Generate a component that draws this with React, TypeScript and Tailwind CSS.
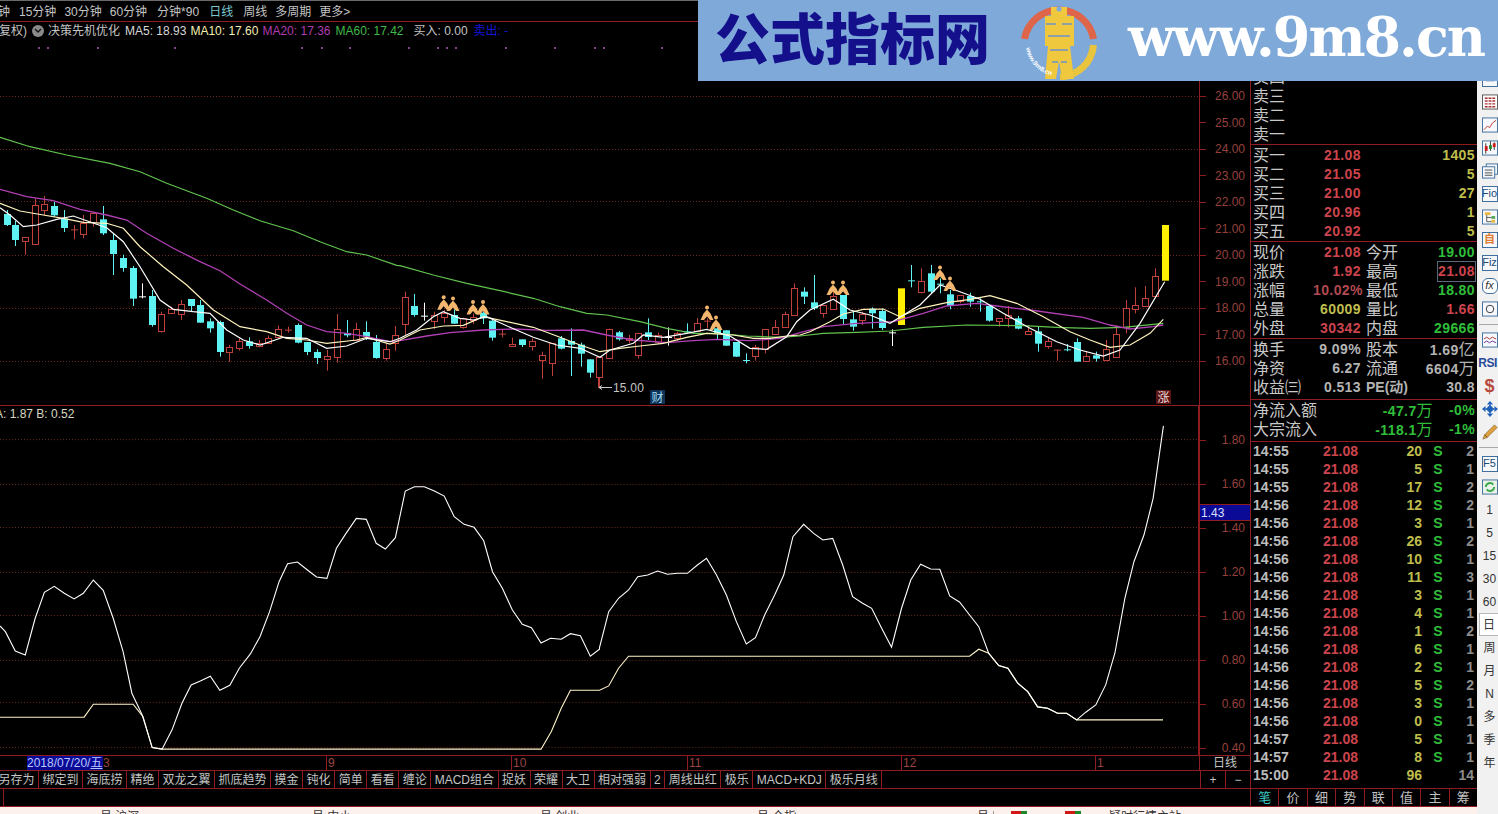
import React from "react";

type P = [number, number];
const z7 = (a: number[][]): P[] => a.map(([x, y]) => [x / 3, 130 + y / 3]);
const z8 = (a: number[][]): P[] => a.map(([x, y]) => [400 + x / 3, 250 + y / 3]);
const z9 = (a: number[][]): P[] => a.map(([x, y]) => [790 + x / 3, 210 + y / 3]);
const pts = (a: P[]) => a.map(([x, y]) => `${x.toFixed(1)},${y.toFixed(1)}`).join(" ");

// kind, x, body top, body bottom, wick top, wick bottom (in zoom coordinates)
type C = [string, number, number, number, number, number];
const c7: C[] = [
  ["c", 20, 252, 285, 240, 288], ["c", 46, 285, 330, 272, 348], ["r", 76, 322, 335, 322, 374], ["r", 106, 225, 342, 205, 342],
  ["r", 133, 222, 240, 198, 256], ["c", 163, 228, 256, 215, 260], ["c", 193, 266, 294, 240, 306], ["x", 221, 298, 300, 285, 328],
  ["r", 250, 278, 312, 255, 325], ["r", 280, 250, 278, 250, 290], ["c", 310, 268, 310, 228, 315], ["c", 340, 330, 372, 310, 435],
  ["c", 368, 384, 414, 374, 425], ["c", 398, 414, 506, 408, 528], ["w", 427, 499, 501, 460, 505], ["c", 457, 498, 585, 480, 590],
  ["r", 484, 553, 603, 545, 608], ["r", 514, 538, 550, 530, 552], ["r", 544, 523, 553, 510, 570], ["c", 574, 507, 528, 507, 545],
  ["c", 601, 525, 578, 510, 578], ["c", 631, 574, 595, 565, 608], ["c", 661, 576, 666, 572, 680], ["r", 688, 651, 667, 645, 695],
  ["r", 718, 634, 654, 625, 662], ["c", 748, 634, 648, 622, 656], ["r", 778, 640, 650, 630, 652], ["r", 805, 625, 640, 616, 640],
  ["r", 835, 596, 620, 587, 626], ["x", 865, 599, 601, 590, 608], ["c", 895, 585, 638, 580, 640], ["c", 922, 636, 666, 636, 675],
  ["c", 952, 666, 684, 658, 702], ["r", 982, 677, 686, 660, 722], ["r", 1012, 596, 680, 552, 698], ["c", 1040, 609, 616, 570, 622],
  ["r", 1069, 596, 630, 578, 630], ["c", 1099, 606, 620, 574, 630], ["c", 1129, 636, 684, 615, 686], ["r", 1157, 658, 686, 640, 692],
  ["r", 1186, 616, 640, 588, 662],
];
const c8: C[] = [
  ["r", 16, 142, 224, 125, 255], ["c", 43, 168, 195, 132, 200], ["w", 73, 197, 199, 158, 212], ["r", 103, 195, 214, 185, 237],
  ["r", 133, 190, 202, 180, 220], ["c", 161, 195, 221, 178, 222], ["r", 190, 203, 230, 203, 236], ["r", 220, 200, 208, 190, 222],
  ["c", 250, 188, 205, 185, 222], ["c", 277, 212, 263, 205, 272], ["x", 307, 251, 254, 238, 262], ["r", 337, 283, 289, 263, 289],
  ["c", 367, 268, 285, 268, 291], ["r", 395, 273, 288, 265, 302], ["r", 425, 316, 330, 305, 386], ["r", 455, 280, 340, 280, 378],
  ["c", 484, 265, 296, 258, 298], ["c", 512, 273, 284, 235, 378], ["c", 542, 284, 311, 278, 350], ["c", 571, 328, 368, 328, 383],
  ["r", 598, 321, 380, 321, 412], ["r", 628, 236, 322, 236, 322], ["c", 658, 247, 268, 243, 272], ["r", 688, 265, 272, 255, 280],
  ["r", 715, 248, 314, 248, 326], ["c", 745, 247, 261, 205, 270], ["r", 775, 255, 275, 248, 282], ["w", 805, 261, 263, 232, 287],
  ["r", 832, 250, 264, 245, 272], ["c", 862, 244, 248, 220, 250], ["r", 892, 220, 243, 204, 245], ["r", 922, 212, 216, 205, 235],
  ["c", 950, 235, 250, 225, 270], ["c", 978, 241, 287, 241, 288], ["c", 1009, 276, 320, 276, 321], ["c", 1039, 330, 334, 310, 340],
  ["r", 1066, 290, 316, 285, 332], ["r", 1096, 238, 297, 238, 310], ["r", 1126, 230, 250, 210, 250], ["r", 1154, 193, 232, 185, 232],
];
const c9: C[] = [
  ["r", 12, 235, 317, 220, 317], ["c", 43, 245, 260, 232, 282], ["c", 73, 277, 295, 195, 300], ["r", 100, 285, 308, 285, 323],
  ["r", 130, 257, 296, 240, 296], ["c", 160, 255, 327, 255, 345], ["c", 190, 328, 350, 305, 362], ["r", 217, 313, 332, 305, 345],
  ["c", 247, 296, 310, 292, 356], ["c", 277, 303, 354, 296, 360], ["w", 307, 367, 369, 358, 408], ["y", 334, 235, 345, 235, 345],
  ["c", 364, 211, 213, 165, 232], ["r", 394, 214, 248, 175, 250], ["c", 424, 190, 245, 165, 250], ["c", 451, 221, 223, 205, 250],
  ["c", 481, 253, 288, 240, 298], ["r", 511, 255, 272, 255, 280], ["c", 539, 258, 275, 248, 290], ["c", 569, 274, 276, 265, 305],
  ["c", 598, 288, 332, 285, 335], ["r", 628, 325, 335, 325, 350], ["r", 655, 316, 324, 288, 352], ["c", 685, 325, 356, 318, 358],
  ["r", 715, 363, 373, 345, 373], ["c", 745, 364, 401, 350, 425], ["r", 773, 392, 407, 382, 416], ["x", 802, 419, 421, 419, 452],
  ["c", 832, 418, 422, 402, 424], ["c", 862, 396, 455, 385, 455], ["r", 889, 438, 452, 425, 452], ["c", 919, 436, 446, 425, 455],
  ["r", 949, 418, 450, 390, 450], ["r", 979, 373, 442, 345, 442], ["r", 1007, 295, 352, 270, 370], ["r", 1036, 284, 296, 232, 310],
  ["r", 1066, 265, 290, 228, 290], ["r", 1094, 199, 260, 175, 260], ["y", 1124, 45, 212, 45, 212],
];

const green: P[] = [
  ...z7([[0, 22], [90, 50], [200, 75], [330, 100], [420, 125], [500, 160], [620, 205], [700, 240], [780, 272], [880, 302], [960, 335], [1040, 365], [1100, 375], [1190, 406]]),
  ...z8([[0, 47], [100, 75], [200, 100], [300, 122], [400, 145], [480, 170], [560, 190], [620, 195], [720, 215], [800, 235], [880, 250], [950, 250], [1040, 258], [1140, 262]]),
  ...z9([[30, 378], [100, 370], [200, 367], [300, 363], [400, 352], [530, 345], [700, 347], [800, 352], [900, 355], [1000, 352], [1120, 340]]),
];
const purple: P[] = [
  ...z7([[0, 178], [80, 200], [160, 212], [240, 238], [320, 255], [380, 270], [440, 310], [520, 355], [600, 395], [660, 422], [720, 462], [800, 510], [860, 550], [920, 585], [980, 605], [1040, 610], [1100, 620], [1170, 635]]),
  ...z8([[0, 272], [80, 258], [150, 248], [250, 240], [340, 237], [440, 241], [550, 240], [620, 255], [700, 270], [800, 278], [880, 272], [950, 268], [1050, 272], [1140, 265]]),
  ...z9([[30, 368], [100, 350], [200, 340], [310, 335], [400, 310], [470, 288], [560, 280], [620, 288], [720, 300], [880, 322], [960, 345], [1020, 357], [1090, 350], [1120, 345]]),
];
const pale: P[] = [
  ...z7([[0, 220], [60, 243], [130, 255], [190, 265], [250, 277], [320, 280], [370, 295], [420, 350], [490, 410], [560, 465], [640, 540], [720, 590], [800, 605], [860, 625], [920, 630], [980, 640], [1070, 630], [1100, 622], [1170, 642]]),
  ...z8([[0, 270], [60, 240], [130, 228], [190, 226], [250, 200], [320, 215], [400, 232], [470, 258], [540, 285], [600, 305], [660, 295], [720, 288], [790, 280], [860, 262], [920, 250], [1000, 255], [1060, 265], [1110, 265], [1160, 258]]),
  ...z9([[30, 375], [60, 365], [120, 335], [160, 312], [220, 298], [280, 297], [330, 320], [390, 295], [470, 278], [540, 268], [600, 257], [680, 280], [760, 320], [840, 365], [900, 390], [960, 412], [1020, 405], [1080, 370], [1120, 328]]),
];
const white: P[] = [
  ...z7([[0, 233], [30, 255], [70, 290], [110, 285], [170, 268], [220, 258], [260, 272], [320, 293], [370, 335], [420, 410], [480, 510], [520, 538], [580, 545], [630, 550], [680, 600], [730, 630], [780, 645], [850, 622], [920, 625], [980, 655], [1040, 648], [1100, 625], [1170, 635]]),
  ...z8([[0, 265], [50, 240], [100, 200], [130, 185], [180, 205], [220, 210], [260, 200], [330, 232], [400, 262], [470, 285], [540, 295], [600, 322], [630, 300], [700, 280], [730, 255], [790, 262], [860, 250], [920, 238], [990, 258], [1050, 295], [1100, 298], [1160, 260]]),
  ...z9([[20, 335], [60, 300], [130, 268], [180, 300], [240, 315], [300, 340], [390, 285], [450, 225], [510, 245], [570, 268], [640, 310], [720, 355], [800, 395], [870, 420], [940, 438], [990, 420], [1050, 340], [1124, 215]]),
];

const sx = 600 / 1568;
const z11 = (a: number[][]): P[] => a.map(([x, y]) => [x * sx, 405 + y / 3]);
const z12 = (a: number[][]): P[] => a.map(([x, y]) => [600 + x * sx, 405 + y / 3]);
const lineA: P[] = [
  ...z11([[0, 663], [14, 680], [40, 738], [66, 750], [92, 640], [116, 562], [142, 544], [168, 565], [194, 582], [218, 565], [244, 525], [270, 556], [296, 640], [322, 740], [345, 865], [372, 930], [398, 1028], [424, 1033], [450, 975], [476, 895], [500, 840], [524, 828], [550, 814], [575, 856], [601, 841], [626, 790], [655, 747], [680, 695], [705, 620], [730, 530], [752, 476], [778, 471], [804, 495], [828, 516], [855, 520], [880, 430], [905, 385], [932, 340], [958, 343], [984, 415], [1008, 432], [1034, 398], [1060, 258], [1084, 245], [1110, 245], [1136, 258], [1162, 273], [1188, 335], [1214, 358], [1240, 367], [1265, 407], [1288, 500], [1314, 550], [1340, 615], [1366, 658], [1390, 668], [1415, 714], [1440, 700], [1468, 703], [1492, 686], [1518, 692], [1544, 754], [1568, 733]]),
  ...z12([[0, 728], [24, 620], [50, 580], [76, 555], [100, 515], [126, 510], [152, 498], [178, 508], [204, 505], [230, 505], [256, 480], [280, 460], [306, 510], [332, 570], [358, 650], [384, 717], [408, 698], [432, 630], [458, 570], [482, 510], [506, 395], [534, 358], [560, 385], [584, 405], [610, 400], [636, 480], [662, 575], [688, 595], [712, 610], [738, 670], [764, 727], [790, 610], [814, 525], [840, 478], [866, 492], [890, 493], [916, 573], [942, 592], [968, 630], [992, 665], [1018, 745], [1044, 782], [1068, 790], [1094, 835], [1120, 860], [1146, 906], [1172, 910], [1198, 925], [1222, 925], [1248, 945], [1272, 922], [1298, 900], [1324, 840], [1348, 745], [1374, 580], [1398, 470], [1424, 390], [1448, 280], [1464, 150], [1475, 62]]),
];
const lineB: P[] = [
  ...z11([[0, 937], [220, 937], [244, 898], [348, 898], [374, 935], [398, 1028], [424, 1033], [1415, 1033], [1442, 980], [1468, 910], [1492, 856], [1568, 856]]),
  ...z12([[24, 843], [50, 790], [76, 754], [968, 754], [992, 733], [1018, 745], [1044, 782], [1068, 790], [1094, 835], [1120, 860], [1146, 906], [1172, 910], [1198, 925], [1222, 925], [1248, 945], [1474, 945]]),
];

const people: P[] = [[443.7, 302.7], [453, 304], [473, 307.5], [483, 307.5], [707, 313], [716, 323], [833, 288], [843, 288], [940, 273], [950, 284]];
const dots = [38, 47, 97, 174, 301, 321, 349, 408, 437, 446, 455, 505, 554, 594, 603, 661];

function Candle({ c, map }: { c: C; map: (a: number[][]) => P[] }) {
  const [kind, x, t, b, wt, wb] = c;
  const [[px, top], [, bot], [, wTop], [, wBot]] = map([[x, t], [x, b], [x, wt], [x, wb]]);
  const cx = Math.round(px) + 0.5;
  const color = kind === "c" ? "#5ef2f2" : kind === "w" ? "#ffffff" : kind === "y" ? "#ffee00" : "#c0403c";
  if (kind === "y") return <rect x={cx - 3.5} y={top} width={7} height={bot - top} fill={color} />;
  const h = bot - top;
  return (
    <g>
      <line x1={cx} x2={cx} y1={wTop} y2={wBot} stroke={color} strokeWidth={1} />
      {h < 2 ? (
        <line x1={cx - 3.5} x2={cx + 3.5} y1={top + 0.5} y2={top + 0.5} stroke={color} strokeWidth={1} />
      ) : kind === "c" ? (
        <rect x={cx - 3.5} y={top} width={7} height={h} fill={color} />
      ) : (
        <rect x={cx - 3} y={Math.round(top) + 0.5} width={6} height={Math.round(h)} fill="#000" stroke={color} strokeWidth={1} />
      )}
    </g>
  );
}

function Person({ x, y }: { x: number; y: number }) {
  return (
    <g transform={`translate(${x} ${y})`} fill="#f2b66e">
      <circle cx={0} cy={-5.5} r={2} />
      <path d="M0,-3.5 L-3.5,0.5 L-6.5,7 L-3,7 L0,3.5 L3,7 L6.5,7 L3.5,0.5 Z" />
    </g>
  );
}

function MainChart() {
  return (
    <svg viewBox="0 40 1199 365" className="block h-[365px] w-[1199px]">
      {dots.map((x) => (
        <rect key={x} x={x} y={47} width={2} height={2} fill="#8a3f8a" />
      ))}
      {[96, 149, 201, 255, 308, 361].map((y) => (
        <line key={y} x1={0} x2={1199} y1={y + 0.5} y2={y + 0.5} stroke="#6b2422" strokeDasharray="1 2" />
      ))}
      {c7.map((c, i) => <Candle key={i} c={c} map={z7} />)}
      {c8.map((c, i) => <Candle key={i} c={c} map={z8} />)}
      {c9.map((c, i) => <Candle key={i} c={c} map={z9} />)}
      <polyline points={pts(green)} fill="none" stroke="#62c44e" strokeWidth={1.2} />
      <polyline points={pts(purple)} fill="none" stroke="#b040b4" strokeWidth={1.3} />
      <polyline points={pts(pale)} fill="none" stroke="#fff4bc" strokeWidth={1.2} />
      <polyline points={pts(white)} fill="none" stroke="#ffffff" strokeWidth={1.2} />
      {people.map(([x, y], i) => <Person key={i} x={x} y={y} />)}
      <line x1={598.5} x2={598.5} y1={378} y2={388} stroke="#c0403c" />
      <path d="M599 387.5 H612 M599 387.5 l3 -2 M599 387.5 l3 2" stroke="#c8c8c8" fill="none" />
      <text x={613} y={392} fill="#c4c4c4" fontSize={12} letterSpacing={0.2}>15.00</text>
      <rect x={650} y={390} width={15} height={14} fill="#0f3358" />
      <text x={651.5} y={401.5} fill="#9fdcf0" fontSize={12}>财</text>
      <rect x={1156} y={390} width={15} height={14} fill="#5a1414" />
      <text x={1157.5} y={401.5} fill="#f0dcdc" fontSize={12}>涨</text>
    </svg>
  );
}

function LowerChart() {
  return (
    <svg viewBox="0 406 1199 349" className="block h-[349px] w-[1198px]">
      {[439, 484, 527, 572, 615, 660, 702, 747].map((y) => (
        <line key={y} x1={0} x2={1199} y1={y + 0.5} y2={y + 0.5} stroke="#6b2a20" strokeDasharray="1 2" />
      ))}
      <polyline points={pts(lineB)} fill="none" stroke="#fff4c8" strokeWidth={1.1} />
      <polyline points={pts(lineA)} fill="none" stroke="#ffffff" strokeWidth={1.1} />
    </svg>
  );
}

const tabs = ["绑定到", "海底捞", "精绝", "双龙之翼", "抓底趋势", "摸金", "钝化", "简单", "看看", "缠论", "MACD组合", "捉妖", "荣耀", "大卫", "相对强弱", "2", "周线出红", "极乐", "MACD+KDJ", "极乐月线"];

function Axis({ labels, pad, rowClass }: { labels: string[]; pad: string; rowClass: string }) {
  return (
    <div className={`flex flex-col ${pad}`}>
      {labels.map((l) => (
        <div key={l} className={`flex shrink-0 items-center justify-between pr-[5px] ${rowClass}`}>
          <span className="h-px w-[6px] bg-[#8f1d1f]" />
          <span className="text-[12px] leading-none text-[#96403e]">{l}</span>
        </div>
      ))}
    </div>
  );
}

function ChartColumn() {
  return (
    <div className="flex h-full w-[1250px] shrink-0 flex-col">
      <div className="flex h-[22px] shrink-0 items-center gap-[8px] overflow-hidden border-b border-t border-b-[#8f1d1f] border-t-[#6a6a6a] pt-[1px] text-[12px] text-[#c4c4c4]">
        <span className="-ml-[2px] mr-[1px]">钟</span>
        <span>15分钟</span>
        <span>30分钟</span>
        <span className="mr-[2px]">60分钟</span>
        <span className="mr-[2px]">分钟*90</span>
        <span className="text-[#7cc8d0]">日线</span>
        <span className="ml-[2px]">周线</span>
        <span>多周期</span>
        <span>更多&gt;</span>
      </div>
      <div className="flex h-[384px] shrink-0 border-b border-[#8f1d1f]">
        <div className="flex w-[1199px] shrink-0 flex-col">
          <div className="flex h-[18px] shrink-0 items-center overflow-hidden whitespace-nowrap text-[12px] text-[#c4c4c4]">
            <span className="-ml-[1px]">复权)</span>
            <span className="ml-[5px] flex h-[12px] w-[12px] items-center justify-center rounded-full bg-[#8a8a8a]">
              <svg width="8" height="6" viewBox="0 0 8 6"><path d="M1 1 L4 4 L7 1" stroke="#111" strokeWidth="1.4" fill="none" /></svg>
            </span>
            <span className="ml-[4px]">决策先机优化</span>
            <span className="ml-[5px] text-[#d8d8d8]">MA5: 18.93</span>
            <span className="ml-[4px] text-[#f4efb4]">MA10: 17.60</span>
            <span className="ml-[4px] text-[#b03cb0]">MA20: 17.36</span>
            <span className="ml-[5px] text-[#40b84a]">MA60: 17.42</span>
            <span className="ml-[10px] text-[#c4c4c4]">买入: 0.00</span>
            <span className="ml-[6px] text-[#1414d8]">卖出: -</span>
          </div>
          <MainChart />
        </div>
        <div className="w-[51px] shrink-0 overflow-hidden border-l border-[#8f1d1f]">
          <Axis labels={["26.00", "25.00", "24.00", "23.00", "22.00", "21.00", "20.00", "19.00", "18.00", "17.00", "16.00"]} pad="pt-[61px]" rowClass="h-[26.5px]" />
        </div>
      </div>
      <div className="flex h-[350px] shrink-0 border-b border-[#8f1d1f]">
        <div className="relative w-[1198px] shrink-0">
          <LowerChart />
          <span className="absolute left-[-5px] top-[1px] text-[12px] leading-[15px] text-[#d8d8c0]">A: 1.87 B: 0.52</span>
        </div>
        <div className="relative w-[52px] shrink-0 overflow-hidden border-l-2 border-[#8f1d1f]">
          <Axis labels={["1.80", "1.60", "1.40", "1.20", "1.00", "0.80", "0.60", "0.40"]} pad="pt-[12px]" rowClass="h-[44px]" />
          <span className="absolute left-0 right-0 top-[98px] flex h-[17px] items-center border-y border-[#8f1d1f] bg-[#0a0a96] pl-[1px] text-[12px] text-[#d8e0ff]">1.43</span>
        </div>
      </div>
      <div className="flex h-[15px] shrink-0 items-center border-b border-[#8f1d1f] text-[12px] leading-none text-[#9a4440]">
        <span className="w-[27px] shrink-0" />
        <span className="flex h-full w-[76px] shrink-0 items-center whitespace-nowrap bg-[#0a0a96] text-[#b8c8ff]">2018/07/20/<span className="underline">五</span></span>
        <span className="w-[223px] shrink-0">3</span>
        <span className="flex h-full w-[185px] shrink-0 items-center border-l border-[#8f1d1f] pl-[1px]">9</span>
        <span className="flex h-full w-[176px] shrink-0 items-center border-l border-[#8f1d1f] pl-[1px]">10</span>
        <span className="flex h-full w-[214px] shrink-0 items-center border-l border-[#8f1d1f] pl-[1px]">11</span>
        <span className="flex h-full w-[194px] shrink-0 items-center border-l border-[#8f1d1f] pl-[1px]">12</span>
        <span className="flex h-full w-[104px] shrink-0 items-center border-l border-[#8f1d1f] pl-[1px]">1</span>
        <span className="flex h-full flex-1 items-center justify-center border-l border-[#8f1d1f] text-[#c4c4c4]">日线</span>
      </div>
      <div className="flex h-[18px] shrink-0 border-b border-[#8f1d1f] text-[12px] text-[#c4c4c4]">
        <div className="flex w-[1200px] shrink-0 overflow-hidden">
          <span className="-ml-[5px] flex items-center whitespace-nowrap border-r border-[#8f1d1f] px-[3.5px] pt-[1px]">另存为</span>
          {tabs.map((t) => (
            <span key={t} className="flex items-center whitespace-nowrap border-r border-[#8f1d1f] px-[3.5px] pt-[1px]">{t}</span>
          ))}
        </div>
        <span className="flex flex-1 items-center justify-center border-l border-[#8f1d1f]">+</span>
        <span className="flex flex-1 items-center justify-center border-l border-[#8f1d1f]">−</span>
      </div>
      <div className="flex h-[18px] shrink-0 border-b border-[#8f1d1f]">
        <span className="ml-[3px] h-full w-px bg-[#8f1d1f]" />
      </div>
    </div>
  );
}

const lab = "text-[16px] leading-[19px] text-[#c8c8c8]";
const num = "text-[14px] font-bold leading-[19px] tracking-[0.4px]";
const R = "text-[#cc444c]";
const G = "text-[#2fbe3a]";
const Y = "text-[#bfbd4c]";
const W = "text-[#b4b4b4]";

const buys = [["买一", "21.08", "1405"], ["买二", "21.05", "5"], ["买三", "21.00", "27"], ["买四", "20.96", "1"], ["买五", "20.92", "5"]];
const quotes = [
  ["现价", "21.08", R, "今开", "19.00", G],
  ["涨跌", "1.92", R, "最高", "21.08", R],
  ["涨幅", "10.02%", "text-[#b04a50]", "最低", "18.80", G],
  ["总量", "60009", Y, "量比", "1.66", R],
  ["外盘", "30342", R, "内盘", "29666", G],
];
const trades: [string, string, string][] = [
  ["14:55", "20", "2"], ["14:55", "5", "1"], ["14:55", "17", "2"], ["14:56", "12", "2"], ["14:56", "3", "1"], ["14:56", "26", "2"],
  ["14:56", "10", "1"], ["14:56", "11", "3"], ["14:56", "3", "1"], ["14:56", "4", "1"], ["14:56", "1", "2"], ["14:56", "6", "1"],
  ["14:56", "2", "1"], ["14:56", "5", "2"], ["14:56", "3", "1"], ["14:56", "0", "1"], ["14:57", "5", "1"], ["14:57", "8", "1"], ["15:00", "96", "14"],
];

function Row3({ a, b, c, d, e, boldC }: { a: string; b: React.ReactNode; c: string; d: React.ReactNode; e?: string; boldC?: boolean }) {
  return (
    <div className="flex h-[19px] items-center pl-[2px] pr-[2px]">
      <span className={`w-[60px] ${lab}`}>{a}</span>
      <span className={`w-[48px] whitespace-nowrap text-right ${num} ${W}`}>{b}</span>
      <span className={`ml-[5px] w-[44px] whitespace-nowrap ${boldC ? `text-[14px] font-bold leading-[19px] ${W}` : lab}`}>{c}</span>
      <span className={`flex-1 whitespace-nowrap text-right ${num} ${e || W}`}>{d}</span>
    </div>
  );
}

function Panel() {
  return (
    <div className="flex h-full w-[227px] shrink-0 flex-col overflow-hidden border-l border-[#8f1d1f]">
      <div className="flex h-[145px] shrink-0 flex-col justify-end border-b border-[#8f1d1f] pl-[2px]">
        {["卖五", "卖四", "卖三", "卖二", "卖一"].map((s) => (
          <div key={s} className={`h-[19px] ${lab}`}>{s}</div>
        ))}
      </div>
      <div className="h-[97px] shrink-0 border-b border-[#8f1d1f] pt-[1px]">
        {buys.map(([a, b, c]) => (
          <div key={a} className="flex h-[19px] items-center pl-[2px] pr-[2px]">
            <span className={`w-[60px] ${lab}`}>{a}</span>
            <span className={`w-[48px] text-right ${num} ${R}`}>{b}</span>
            <span className={`flex-1 text-right ${num} ${Y}`}>{c}</span>
          </div>
        ))}
      </div>
      <div className="h-[97px] shrink-0 border-b border-[#8f1d1f] pt-[1px]">
        {quotes.map(([a, b, bc, c, d, dc]) => (
          <div key={a} className="flex h-[19px] items-center pl-[2px] pr-[1px]">
            <span className={`w-[60px] ${lab}`}>{a}</span>
            <span className={`w-[48px] whitespace-nowrap text-right ${num} ${bc}`}>{b}</span>
            <span className={`ml-[5px] w-[40px] ${lab}`}>{c}</span>
            <span className="flex flex-1 justify-end">
              <span className={`${num} ${dc} ${a === "涨跌" ? "border border-[#5a6a7a] leading-[17px]" : "pr-[1px]"}`}>{d}</span>
            </span>
          </div>
        ))}
      </div>
      <div className="h-[61px] shrink-0 border-b border-[#8f1d1f] pt-[1px]">
        <Row3 a="换手" b="9.09%" c="股本" d={<>1.69<span className="text-[16px] font-normal">亿</span></>} />
        <Row3 a="净资" b="6.27" c="流通" d={<>6604<span className="text-[16px] font-normal">万</span></>} />
        <Row3 a="收益㈢" b="0.513" c="PE(动)" d="30.8" boldC />
      </div>
      <div className="h-[42px] shrink-0 border-b border-[#8f1d1f] pt-[1px]">
        {[["净流入额", "-47.7", "-0%"], ["大宗流入", "-118.1", "-1%"]].map(([a, b, c]) => (
          <div key={a} className="flex h-[19px] items-center pl-[2px] pr-[2px]">
            <span className={`w-[100px] ${lab}`}>{a}</span>
            <span className={`w-[80px] text-right ${num} ${G}`}>{b}<span className="text-[16px] font-normal">万</span></span>
            <span className={`flex-1 text-right ${num} ${G}`}>{c}</span>
          </div>
        ))}
      </div>
      <div className="h-[347px] shrink-0 border-b border-[#8f1d1f]">
        {trades.map(([t, v, n], i) => (
          <div key={i} className="flex h-[18px] items-center pl-[2px]">
            <span className="w-[60px] text-[14px] font-bold leading-[18px] text-[#bcbcbc]">{t}</span>
            <span className={`w-[45px] text-right text-[14px] font-bold leading-[18px] ${R}`}>21.08</span>
            <span className={`w-[64px] text-right text-[14px] font-bold leading-[18px] ${Y}`}>{v}</span>
            <span className={`w-[32px] text-center text-[14px] font-bold leading-[18px] ${G}`}>{i < 18 ? "S" : ""}</span>
            <span className="w-[20px] text-right text-[14px] font-bold leading-[18px] text-[#8c8c8c]">{n}</span>
          </div>
        ))}
      </div>
      <div className="flex h-[18px] shrink-0 border-b border-[#8f1d1f] text-[13px] text-[#c0c0c0]">
        {["笔", "价", "细", "势", "联", "值", "主", "筹"].map((t, i) => (
          <span key={t} className={`flex flex-1 items-center justify-center border-r border-[#8f1d1f] last:border-r-0 ${i === 0 ? "text-[#3cc8c0]" : ""}`}>{t}</span>
        ))}
      </div>
    </div>
  );
}

function Box({ children, className = "" }: { children: React.ReactNode; className?: string }) {
  return (
    <span className={`flex h-[16px] w-[16px] items-center justify-center overflow-hidden border border-[#3e6f9e] bg-[#f6f8fb] text-[11px] leading-none ${className}`}>{children}</span>
  );
}

function Tool({ children }: { children: React.ReactNode }) {
  return <div className="flex h-[23px] shrink-0 items-center justify-center pl-[4px] text-[12px] leading-none text-[#333]">{children}</div>;
}

function Toolbar() {
  return (
    <div className="flex h-full w-[21px] shrink-0 flex-col overflow-hidden bg-[#f1f1f1] pt-[67px] [font-family:'Liberation_Sans','Noto_Sans_CJK_SC',sans-serif]">
      <Tool><Box><span className="text-[#3e6f9e]">▭</span></Box></Tool>
      <Tool>
        <svg width="16" height="16" viewBox="0 0 17 16"><rect x=".5" y=".5" width="16" height="15" fill="#fff" stroke="#555" /><path d="M3 4h11M3 7h11M3 10h11M3 13h11" stroke="#a33" strokeWidth="1.5" /><path d="M6.5 3v11M10.5 3v11" stroke="#fff" /></svg>
      </Tool>
      <Tool>
        <svg width="16" height="16" viewBox="0 0 17 16"><rect x=".5" y=".5" width="16" height="15" fill="#f6f8fb" stroke="#3e6f9e" /><path d="M2 13 L6 9 L8 11 L11 6 L15 3" stroke="#c0392b" fill="none" /></svg>
      </Tool>
      <Tool>
        <svg width="16" height="16" viewBox="0 0 17 16"><rect x=".5" y=".5" width="16" height="15" fill="#f6f8fb" stroke="#3e6f9e" /><path d="M4 3v11M9 1v10M13 2v8" stroke="#333" /><rect x="3" y="6" width="3" height="5" fill="#d01818" /><rect x="7.5" y="5" width="3" height="4" fill="#1a8a2a" /><rect x="11.5" y="3" width="3" height="4" fill="#d01818" /></svg>
      </Tool>
      <Tool>
        <svg width="16" height="16" viewBox="0 0 17 16"><rect x="4.5" y=".5" width="12" height="11" fill="#f6f8fb" stroke="#3e6f9e" /><rect x=".5" y="3.5" width="13" height="12" fill="#f6f8fb" stroke="#3e6f9e" /><path d="M3 7h8M3 10h8M3 12.5h8" stroke="#444" /></svg>
      </Tool>
      <Tool><Box className="text-[#1c4a78]">Fio</Box></Tool>
      <Tool>
        <svg width="16" height="16" viewBox="0 0 17 16"><rect x=".5" y=".5" width="16" height="15" fill="#f6f8fb" stroke="#3e6f9e" /><rect x="3" y="3" width="6" height="3" fill="#e8b840" /><rect x="10" y="7" width="4" height="3" fill="#58a858" /><rect x="10" y="11" width="4" height="3" fill="#e8b840" /><path d="M5 6v7h5M5 8.5h5" stroke="#555" fill="none" /></svg>
      </Tool>
      <Tool><Box className="font-bold text-[#e07a30]">自</Box></Tool>
      <Tool><Box className="text-[#1c4a78]">Fiz</Box></Tool>
      <Tool><span className="flex h-[16px] w-[16px] items-center justify-center rounded-[6px] border border-[#3e6f9e] bg-white text-[11px] italic leading-none text-[#333]">fx</span></Tool>
      <Tool>
        <svg width="16" height="16" viewBox="0 0 17 16"><rect x=".5" y=".5" width="16" height="15" fill="#f6f8fb" stroke="#3e6f9e" /><circle cx="8.5" cy="8" r="4" fill="none" stroke="#333" /></svg>
      </Tool>
      <div className="flex h-[8px] shrink-0 items-center pl-[2px]"><span className="h-px w-full bg-[#a8a8a8]" /></div>
      <Tool>
        <svg width="16" height="16" viewBox="0 0 17 16"><rect x=".5" y=".5" width="16" height="15" fill="#f6f8fb" stroke="#3e6f9e" /><path d="M2 7 L5 5 L8 7 L11 5 L15 7" stroke="#a33" fill="none" /><path d="M2 11 L5 9 L8 11 L11 9 L15 11" stroke="#639" fill="none" /></svg>
      </Tool>
      <Tool><span className="-ml-[4px] text-[12px] font-bold tracking-[-0.5px] text-[#2a4a9c]">RSI</span></Tool>
      <Tool><span className="text-[18px] font-bold text-[#b84a3c]">$</span></Tool>
      <Tool>
        <svg width="16" height="16" viewBox="0 0 18 18" fill="#1f5fb8"><path d="M9 0 L12.5 4 H5.5 Z M9 18 L5.5 14 H12.5 Z M0 9 L4 5.5 V12.5 Z M18 9 L14 12.5 V5.5 Z" /><rect x="6" y="6" width="6" height="6" rx="1.5" /><rect x="4" y="8" width="10" height="2" /><rect x="8" y="4" width="2" height="10" /></svg>
      </Tool>
      <Tool>
        <svg width="16" height="16" viewBox="0 0 18 18"><path d="M14 1 L17 4 L6 15 L1 17 L3 12 Z" fill="#e0a040" stroke="#8a6a30" strokeWidth=".8" /><path d="M3 12 L6 15" stroke="#6a4a20" /></svg>
      </Tool>
      <div className="flex h-[9px] shrink-0 items-center pl-[2px]"><span className="h-px w-full bg-[#a8a8a8]" /></div>
      <Tool><Box className="text-[#1c4a78]">F5</Box></Tool>
      <Tool>
        <svg width="16" height="16" viewBox="0 0 17 16"><rect x=".5" y=".5" width="16" height="15" fill="#e8f2e8" stroke="#3e6f9e" /><path d="M4 8a4.5 4.5 0 0 1 8-2.5M13 8a4.5 4.5 0 0 1-8 2.5" stroke="#3ca84a" strokeWidth="2" fill="none" /></svg>
      </Tool>
      <Tool>1</Tool>
      <Tool>5</Tool>
      <Tool>15</Tool>
      <Tool>30</Tool>
      <Tool>60</Tool>
      <Tool><span className="-ml-[2px] flex h-[23px] w-[19px] items-center justify-center border-y border-l border-[#b8b8b8] bg-white">日</span></Tool>
      <Tool>周</Tool>
      <Tool>月</Tool>
      <Tool>N</Tool>
      <Tool>多</Tool>
      <Tool>季</Tool>
      <Tool>年</Tool>
    </div>
  );
}

function Logo() {
  return (
    <svg width="78" height="78" viewBox="0 0 78 78" className="block shrink-0">
      <path d="M4.5 37 A35 35 0 0 1 73.5 37" fill="none" stroke="#de644a" strokeWidth="7" />
      <path d="M73.5 43 A35 35 0 0 1 40 75" fill="none" stroke="#e9c53e" strokeWidth="7" />
      <path d="M31 5 h16 v9 h7 v30 h-4 l4 33 h-12 l-3 -18 l-3 18 h-11 l3 -33 h-3 v-30 h6 z" fill="#efc83e" />
      <circle cx="39" cy="7" r="2.5" fill="#7fa9d8" />
      <path d="M26 22 h10 M42 22 h10 M28 34 h22 M30 48 h18 M32 60 h6 M41 60 h6" stroke="#8f9fa8" strokeWidth="2" />
      <defs><path id="logoArc" d="M6 46 A34 34 0 0 0 34 74" /></defs>
      <text fill="#ffffff" fontSize="6.5" fontWeight="700"><textPath href="#logoArc">www.9m8.cn</textPath></text>
    </svg>
  );
}

function Banner() {
  return (
    <div className="absolute left-[698px] top-0 flex h-[81px] w-[800px] items-center whitespace-nowrap bg-[#7fa9d8] pl-[17px]">
      <span className="mb-[10px] w-[275px] text-[55px] font-black leading-none text-[#14108c] [font-family:'Noto_Sans_CJK_SC',sans-serif]">公式指标网</span>
      <span className="ml-[30px] shrink-0"><Logo /></span>
      <span className="mb-[7px] ml-[30px] text-[54px] font-bold leading-none tracking-[-2px] text-white [font-family:'DejaVu_Serif',serif]">www.9m8.cn</span>
    </div>
  );
}

export default function App() {
  return (
    <div className="relative flex h-[814px] w-[1498px] overflow-hidden bg-black [font-family:'Liberation_Sans','Noto_Sans_CJK_SC',sans-serif]">
      <div className="flex w-[1477px] shrink-0 flex-col">
        <div className="flex h-[807px] shrink-0">
          <ChartColumn />
          <Panel />
        </div>
        <div className="flex flex-1 items-start overflow-hidden whitespace-nowrap bg-[#fdf1ee] pt-[4px] text-[12px] leading-[12px] text-[#333]">
          <span className="ml-[100px] w-[212px] shrink-0">号 沪深</span>
          <span className="w-[228px] shrink-0">号 中小</span>
          <span className="w-[217px] shrink-0">号 创业</span>
          <span className="w-[220px] shrink-0">号 全指</span>
          <span className="w-[16px] shrink-0">号</span>
          <span className="mr-[17px] h-full w-px bg-[#999]" />
          <span className="h-[8px] w-[10px] shrink-0 bg-[#d01818]" />
          <span className="h-[8px] w-[6px] shrink-0 bg-[#1a8a2a]" />
          <span className="ml-[38px] h-[8px] w-[10px] shrink-0 bg-[#d01818]" />
          <span className="h-[8px] w-[6px] shrink-0 bg-[#1a8a2a]" />
          <span className="ml-[28px]">疑时行情主站</span>
        </div>
      </div>
      <Toolbar />
      <Banner />
    </div>
  );
}
